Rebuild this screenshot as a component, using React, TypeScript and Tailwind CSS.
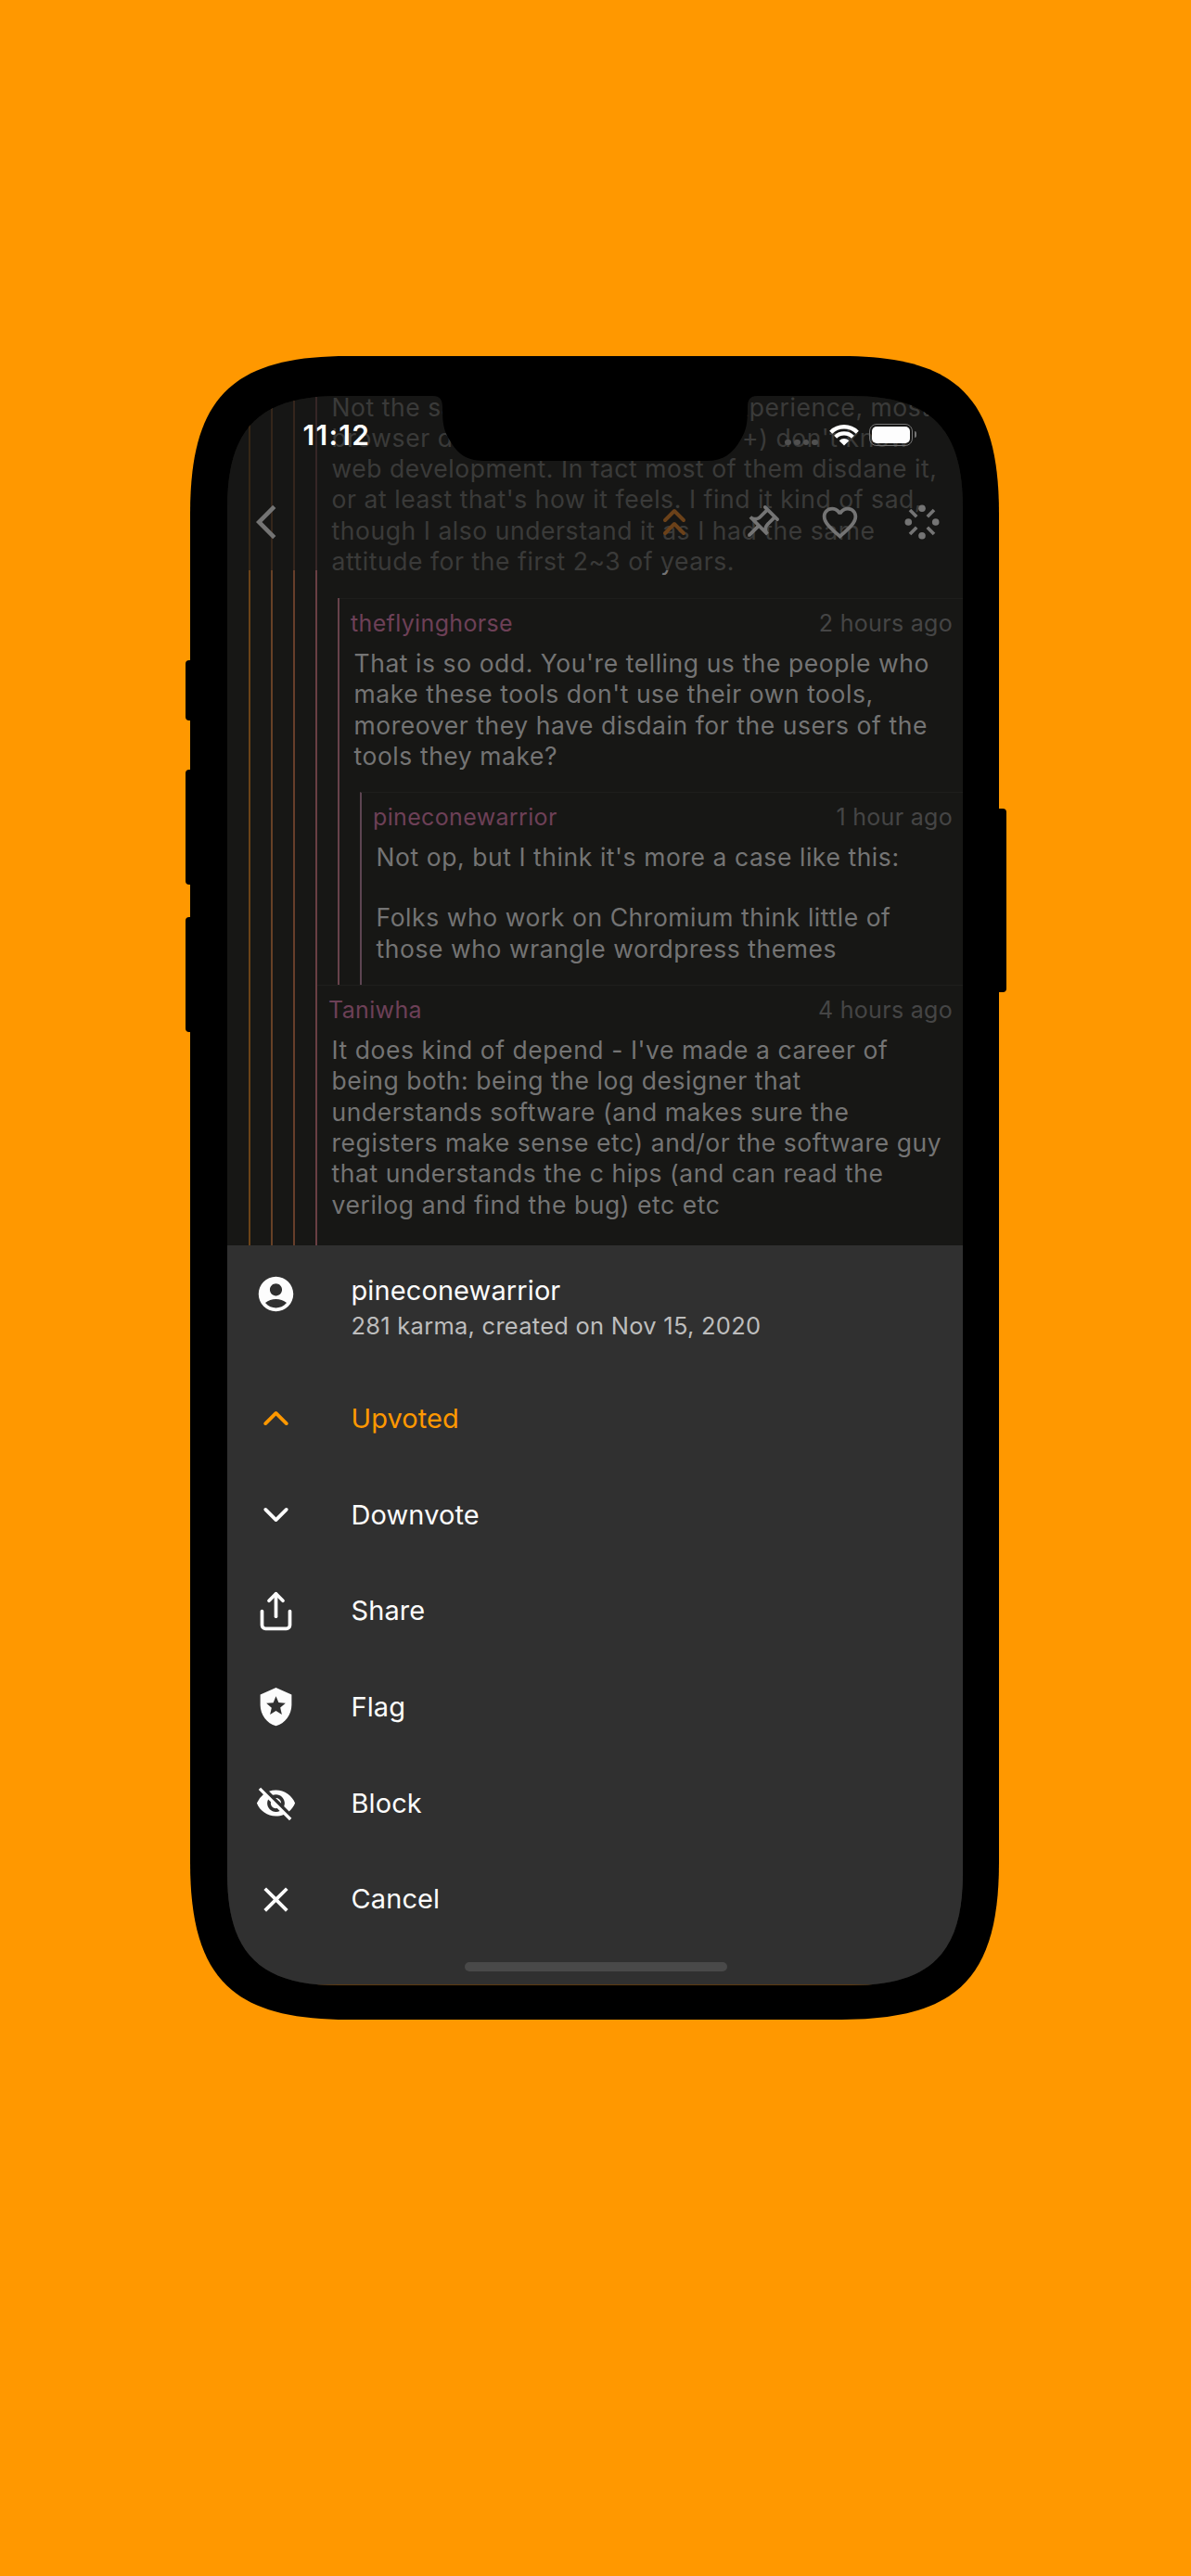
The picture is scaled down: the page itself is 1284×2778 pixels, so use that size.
import type { ReactNode } from "react";
import { ChevronDown, ChevronsUp, ChevronUp, Share } from "lucide-react";
import {
  MdAccountCircle,
  MdArrowBackIos,
  MdClose,
  MdFavoriteBorder,
  MdLocalPolice,
  MdOutlinePushPin,
  MdVisibilityOff,
} from "react-icons/md";

function SparkIcon() {
  return (
    <svg viewBox="-20 -20 40 40" className="size-10 fill-[#747474] stroke-[#747474]">
      <g stroke="none">
        <circle cx="0" cy="-14.7" r="3.8" />
        <circle cx="0" cy="14.7" r="3.8" />
        <circle cx="-14.7" cy="0" r="3.8" />
        <circle cx="14.7" cy="0" r="3.8" />
      </g>
      <path d="M-13-13L-5.8-5.8M13-13L5.8-5.8M-13 13L-5.8 5.8M13 13L5.8 5.8" strokeWidth="3.7" fill="none" />
    </svg>
  );
}

function WifiIcon() {
  return (
    <svg viewBox="0 0 32 24" className="h-6 w-8">
      <g fill="none" stroke="#fff" strokeWidth="4.3">
        <path d="M1.7 9.2A20.2 20.2 0 0 1 30.3 9.2" />
        <path d="M6.67 14.17A13.2 13.2 0 0 1 25.33 14.17" />
      </g>
      <path d="M16 23.5L10.7 18.2A7.5 7.5 0 0 1 21.3 18.2Z" fill="#fff" />
    </svg>
  );
}

function BatteryIcon() {
  return (
    <div className="flex items-center gap-[1.5px]">
      <div className="h-6 w-[47px] rounded-[8px] border-[1.5px] border-[#747474] p-[2px]">
        <div className="h-full w-full rounded-[5px] bg-[#fdfdfd]" />
      </div>
      <div className="h-[7px] w-[2.5px] rounded-r-full bg-[#747474]" />
    </div>
  );
}

function StatusBar() {
  return (
    <div className="absolute inset-x-0 top-0 flex h-[83px] items-center pl-[81.5px] text-white">
      <span className="text-[30px] leading-none font-semibold tracking-[1.3px]">11:12</span>
      <div className="mr-[50px] ml-auto flex items-center">
        <div className="mt-[17px] mr-[12px] flex gap-[3px]">
          <i className="size-[6.7px] rounded-full bg-[#505050]" />
          <i className="size-[6.7px] rounded-full bg-[#505050]" />
          <i className="size-[6.7px] rounded-full bg-[#505050]" />
          <i className="size-[6.7px] rounded-full bg-[#505050]" />
        </div>
        <div className="mr-[11px]">
          <WifiIcon />
        </div>
        <BatteryIcon />
      </div>
    </div>
  );
}

function AppBar() {
  return (
    <div className="absolute inset-x-0 top-0 h-[187.5px] bg-[#171715]/62">
      <div className="flex h-[104px] translate-y-[84px] items-center text-[#747474]">
        <MdArrowBackIos className="ml-[31px] size-11" />
        <ChevronsUp className="ml-auto size-12 text-[#6b4119]" strokeWidth={2} />
        <MdOutlinePushPin className="mt-1 ml-[46px] size-[45px] rotate-45" />
        <MdFavoriteBorder className="ml-[41px] size-[45px]" />
        <div className="mr-6 ml-[46px]">
          <SparkIcon />
        </div>
      </div>
    </div>
  );
}

function Body({ children }: { children: ReactNode }) {
  return (
    <p className="pb-[22.5px] pl-[14.5px] text-[26.5px] leading-[33.33px] tracking-[0.56px] whitespace-nowrap text-[#747474]">
      {children}
    </p>
  );
}

function CommentHead({ name, time }: { name: string; time: string }) {
  return (
    <div className="flex h-[53px] items-center justify-between pr-[11px] pl-[11px] text-[25px]">
      <span className="tracking-[0.35px] text-[#6d4057]">{name}</span>
      <span className="tracking-[0.3px] text-[#454545]">{time}</span>
    </div>
  );
}

function Thread() {
  return (
    <div className="ml-[23px] border-l-2 border-[#6b4318]">
      <div className="ml-[22px] border-l-2 border-[#674126]">
        <div className="ml-[22px] border-l-2 border-[#673e2a]">
          <div className="ml-[22px] h-[930px] border-l-2 border-[#693f43]">
            <div className="-mt-[4.5px] pl-px">
              <Body>
                Not the same as much <span className="ml-[46px]">more experience, most</span>
                <br />
                browser devs I know <span className="ml-[22px]">(mostly C++) don't know</span>
                <br />
                web development. In fact most of them disdane it,
                <br />
                or at least that's how it feels. I find it kind of sad,
                <br />
                though I also understand it as I had the same
                <br />
                attitude for the first 2~3 of years.
              </Body>
            </div>
            <div className="ml-[22px] border-l-2 border-[#67424b]">
              <div className="h-[209px] border-t border-[#1e1e1c] pl-px">
                <CommentHead name="theflyinghorse" time="2 hours ago" />
                <Body>
                  That is so odd. You're telling us the people who
                  <br />
                  make these tools don't use their own tools,
                  <br />
                  moreover they have disdain for the users of the
                  <br />
                  tools they make?
                </Body>
              </div>
              <div className="ml-[22px] h-[208px] border-t border-l-2 border-t-[#1e1e1c] border-l-[#5d4552] pl-px">
                <CommentHead name="pineconewarrior" time="1 hour ago" />
                <Body>
                  Not op, but I think it's more a case like this:
                  <span className="block h-8" />
                  Folks who work on Chromium think little of
                  <br />
                  those who wrangle wordpress themes
                </Body>
              </div>
            </div>
            <div className="border-t border-[#1e1e1c] pl-px">
              <CommentHead name="Taniwha" time="4 hours ago" />
              <Body>
                It does kind of depend - I've made a career of
                <br />
                being both: being the log designer that
                <br />
                understands software (and makes sure the
                <br />
                registers make sense etc) and/or the software guy
                <br />
                that understands the c hips (and can read the
                <br />
                verilog and find the bug) etc etc
              </Body>
            </div>
          </div>
        </div>
      </div>
    </div>
  );
}

function Action({ icon, label, active }: { icon: ReactNode; label: string; active?: boolean }) {
  return (
    <div className={active ? "flex h-[103.7px] items-center text-[#ff9800]" : "flex h-[103.7px] items-center text-[#fcfcfc]"}>
      <div className="ml-[30px] flex w-[45px] justify-center pt-[2px]">{icon}</div>
      <span className="ml-[58.5px] pt-px text-[29px] leading-none tracking-[0.1px]">{label}</span>
    </div>
  );
}

function ActionSheet() {
  return (
    <div className="h-[798px] border-b-[1.5px] border-[#5c390f] bg-[#303030]">
      <div className="flex h-[134px] text-[#fcfcfc]">
        <MdAccountCircle className="mt-[30px] ml-[30px] size-[45px]" />
        <div className="mt-[29px] ml-[58.5px] flex flex-col whitespace-nowrap">
          <span className="text-[29px] leading-[39px] tracking-[0.1px]">pineconewarrior</span>
          <span className="text-[25.5px] leading-[37px] tracking-[0.25px] text-[#bdbdbd]">
            281 karma, created on Nov 15, 2020
          </span>
        </div>
      </div>
      <Action active icon={<ChevronUp className="size-[45px]" />} label="Upvoted" />
      <Action icon={<ChevronDown className="size-[45px]" />} label="Downvote" />
      <Action icon={<Share className="size-[45px]" />} label="Share" />
      <Action icon={<MdLocalPolice className="size-[45px]" />} label="Flag" />
      <Action icon={<MdVisibilityOff className="size-[45px]" />} label="Block" />
      <Action icon={<MdClose className="size-[45px]" />} label="Cancel" />
      <div className="mt-[17px] ml-64 h-[9.5px] w-[283px] rounded-full bg-[#494949]" />
    </div>
  );
}

function Notch() {
  return (
    <svg viewBox="0 0 349 71" className="absolute top-0 left-[222px] h-[71px] w-[349px]">
      <path d="M0 0C7 0 10 4 10 12C10 32 12 38 18 48C26 62 36 70 54 70H295C313 70 323 62 331 48C337 38 339 32 339 12C339 4 342 0 349 0Z" />
    </svg>
  );
}

export default function App() {
  return (
    <div className="h-[2778px] w-[1284px] overflow-hidden bg-[#ff9800] pt-[384px] pl-[205px] font-['Inter',sans-serif]">
      <div className="relative h-[1794px] w-[872px]">
        <div className="absolute top-[328px] -left-[5px] h-[65px] w-4 rounded-[4px] bg-black" />
        <div className="absolute top-[446px] -left-[5px] h-[124px] w-4 rounded-[4px] bg-black" />
        <div className="absolute top-[605px] -left-[5px] h-[124px] w-4 rounded-[4px] bg-black" />
        <div className="absolute top-[488px] -right-[7.5px] h-[198px] w-4 rounded-[4px] bg-black" />
        <div className="relative h-full w-full bg-black px-10 pt-[43px] [clip-path:path('M0_170C0_45_45_0_170_0H702C827_0_872_45_872_170V1624C872_1749_827_1794_702_1794H170C45_1794_0_1749_0_1624Z')]">
          <div className="relative h-[1714px] w-[793px] bg-[#171715] [clip-path:path('M0_120C0_35_35_0_120_0H673C758_0_793_35_793_120V1594C793_1679_758_1714_673_1714H120C35_1714_0_1679_0_1594Z')]">
            <div className="relative h-[916px] overflow-hidden">
              <Thread />
              <AppBar />
              <Notch />
              <StatusBar />
            </div>
            <ActionSheet />
          </div>
        </div>
      </div>
    </div>
  );
}
